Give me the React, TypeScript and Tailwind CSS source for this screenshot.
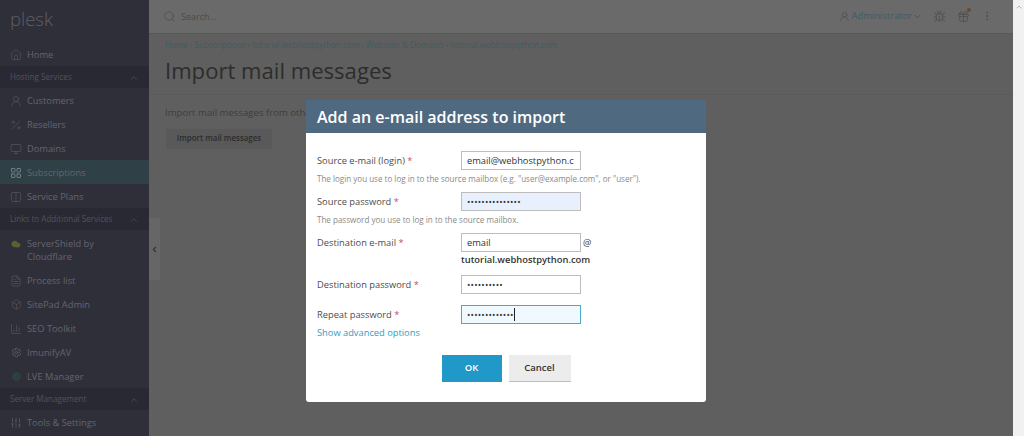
import React from "react";
import {
  Home,
  UserRound,
  Percent,
  Monitor,
  LayoutGrid,
  Columns2,
  FileText,
  BarChart3,
  Settings,
  SlidersVertical,
  ChevronUp,
  ChevronDown,
  ChevronLeft,
  Search,
  Cloud,
  Box,
  EllipsisVertical,
  Gift,
  Bug,
} from "lucide-react";

const font = "font-['Open_Sans','Liberation_Sans',sans-serif]";

const NavItem = ({ icon, children, active = false }: { icon: React.ReactNode; children: React.ReactNode; active?: boolean }) => (
  <div className={`flex items-center h-6 pt-px pl-[10px] gap-[5px] text-[9.3px] text-[#646470] ${active ? "bg-[#2f4146]" : ""}`}>
    <span className={`w-[12px] flex justify-center shrink-0 ${active ? "text-[#7a8488]" : "text-[#5a5a64]"}`}>{icon}</span>
    <span>{children}</span>
  </div>
);

const NavGroup = ({ children }: { children: React.ReactNode }) => (
  <div className="flex items-center justify-between h-[22px] pt-px pl-[10px] pr-[10px] bg-[#292933] text-[8.1px] text-[#52525c]">
    <span>{children}</span>
    <ChevronUp size={10} className="text-[#4c4c56]" />
  </div>
);

const Sidebar = () => (
  <aside className="w-[149px] h-[436px] bg-[#2f2f39] shrink-0 overflow-hidden">
    <div className="h-[42px] pl-[10px] pt-[7px] text-[18.5px] leading-[24px] font-light text-[#5e5e68]">plesk</div>
    <NavItem icon={<Home size={12} strokeWidth={1.25} />}>Home</NavItem>
    <NavGroup>Hosting Services</NavGroup>
    <NavItem icon={<UserRound size={12} strokeWidth={1.25} />}>Customers</NavItem>
    <NavItem icon={<Percent size={12} strokeWidth={1.25} />}>Resellers</NavItem>
    <NavItem icon={<Monitor size={12} strokeWidth={1.25} />}>Domains</NavItem>
    <NavItem active icon={<LayoutGrid size={12} strokeWidth={1.75} />}>Subscriptions</NavItem>
    <NavItem icon={<Columns2 size={12} strokeWidth={1.25} />}>Service Plans</NavItem>
    <NavGroup>Links to Additional Services</NavGroup>
    <div className="flex items-center h-[38px] pt-px pl-[10px] gap-[5px] text-[9.3px] leading-[13px] text-[#646470]">
      <span className="w-[12px] flex justify-center self-start pt-[8px] shrink-0"><Cloud size={10} className="text-[#5a6030]" fill="#5a6030" /></span>
      <span>ServerShield by<br />Cloudflare</span>
    </div>
    <NavItem icon={<FileText size={12} strokeWidth={1.25} />}>Process list</NavItem>
    <NavItem icon={<Box size={11} strokeWidth={1.5} className="text-[#5f4f52]" />}>SitePad Admin</NavItem>
    <NavItem icon={<BarChart3 size={12} strokeWidth={1.25} />}>SEO Toolkit</NavItem>
    <NavItem icon={<Settings size={11} strokeWidth={2} />}>ImunifyAV</NavItem>
    <NavItem icon={<span className="block w-[9px] h-[9px] rounded-full bg-[#2f3f3f]" />}>LVE Manager</NavItem>
    <NavGroup>Server Management</NavGroup>
    <NavItem icon={<SlidersVertical size={12} strokeWidth={1.5} />}>Tools &amp; Settings</NavItem>
  </aside>
);

const TopBar = () => (
  <div className="flex items-center h-[34px] border-b border-[#585858] pl-[14px] pr-[20px] bg-[#6a6a6a]">
    <Search size={13} strokeWidth={1.25} className="text-[#4a4a4a]" />
    <span className="ml-[5px] text-[9px] text-[#4a4a4a]">Search...</span>
    <div className="ml-auto flex items-center text-[#4a4a4a]">
      <UserRound size={11} strokeWidth={1.25} />
      <span className="ml-[2px] text-[9.4px] text-[#3f5c66]">Administrator</span>
      <ChevronDown size={9} className="ml-[1px]" />
      <Bug size={13} strokeWidth={1.25} className="ml-[11px]" />
      <span className="relative ml-[11px]">
        <Gift size={13} strokeWidth={1.25} />
        <span className="absolute -top-[2px] -right-[1px] w-[4px] h-[4px] rounded-full bg-[#6b4a2a]" />
      </span>
      <EllipsisVertical size={12} strokeWidth={1.5} className="ml-[11px]" />
    </div>
  </div>
);

const Field = ({ label, children, hint }: { label: string; children: React.ReactNode; hint?: string }) => (
  <div>
    <div className="flex items-center">
      <label className="w-[144px] text-[9.3px] text-[#4c4c4c]">
        {label} <span className="text-[#c4506a]">*</span>
      </label>
      {children}
    </div>
    {hint && <p className="mt-[3px] text-[8.05px] leading-[12px] text-[#8a8a8a]">{hint}</p>}
  </div>
);

const inputCls =
  "w-[120px] h-[19px] pl-[5px] border border-[#bdbdbd] text-[9.3px] leading-[17px] text-[#333] flex items-center";

const Dots = ({ n }: { n: number }) => (
  <span className="text-[9px] tracking-[0.2px] text-[#333]">{"•".repeat(n)}</span>
);

const Modal = () => (
  <div className="absolute left-[306px] top-[100px] w-[400px] h-[302px] bg-white rounded-b-[3px] overflow-hidden">
    <div className="h-[33px] bg-[#4f6a80] flex items-center px-[11px] text-[16px] font-semibold text-white">
      Add an e-mail address to import
    </div>
    <div className="pl-[11px] pr-[11px] pt-[18px]">
      <Field label="Source e-mail (login)" hint={'The login you use to log in to the source mailbox (e.g. "user@example.com", or "user").'}>
        <div className={`${inputCls} overflow-hidden whitespace-nowrap`}>email@webhostpython.c</div>
      </Field>
      <div className="mt-[7px]">
        <Field label="Source password" hint="The password you use to log in to the source mailbox.">
          <div className={`${inputCls} bg-[#e8f0fe]`}><Dots n={15} /></div>
        </Field>
      </div>
      <div className="mt-[7px]">
        <Field label="Destination e-mail">
          <div className={inputCls}>email</div>
          <span className="ml-[2px] text-[9.3px] text-[#444]">@</span>
        </Field>
      </div>
      <div className="ml-[144px] h-[16px] text-[9.4px] leading-[16px] font-semibold text-[#333]">tutorial.webhostpython.com</div>
      <div className="mt-[7px]">
        <Field label="Destination password">
          <div className={inputCls}><Dots n={10} /></div>
        </Field>
      </div>
      <div className="mt-[11px]">
        <Field label="Repeat password">
          <div className={`${inputCls} bg-[#f0f9fd] !border-[#4aa8c8]`}>
            <Dots n={13} />
            <span className="w-px h-[13px] bg-[#222]" />
          </div>
        </Field>
      </div>
      <div className="mt-px text-[9.3px] leading-[16px] text-[#2b9ec4]">Show advanced options</div>
      <div className="flex justify-center gap-[7px] mt-[14px]">
        <button className="w-[60px] h-[27px] bg-[#2098c8] text-white text-[9.5px] font-semibold">OK</button>
        <button className="w-[62px] h-[27px] bg-[#ececec] border-b border-[#bbb] text-[#333] text-[9.5px] font-semibold">Cancel</button>
      </div>
    </div>
  </div>
);

export default function App() {
  return (
    <div className={`relative w-[1024px] h-[436px] overflow-hidden flex bg-[#5f5f5f] ${font}`}>
      <Sidebar />
      <main className="flex-1 relative min-w-0">
        <TopBar />
        <div className="pl-[16px] h-[61px] border-b border-[#5a5a5a]">
          <div className="pt-[5px] h-[20px] text-[8.1px] leading-[11px] text-[#3f5c60] whitespace-nowrap">
            Home › Subscriptions › tutorial.webhostpython.com › Websites &amp; Domains › tutorial.webhostpython.com
          </div>
          <h1 className="-mt-px text-[22.1px] leading-[34px] text-[#2d2d2d]">Import mail messages</h1>
        </div>
        <div className="pl-[16px] pt-[11px]">
          <p className="text-[9.6px] leading-[14px] text-[#3e3e3e]">Import mail messages from other mail servers.</p>
          <button className="mt-[9px] ml-px w-[106px] h-[20px] bg-[#595959] text-[7.95px] font-semibold text-[#2d2d2d]">Import mail messages</button>
        </div>
        <div className="absolute left-0 top-[218px] w-[11px] h-[62px] bg-[#666666] flex items-center justify-center">
          <ChevronLeft size={9} strokeWidth={3} className="text-[#333]" />
        </div>
      </main>
      <div className="w-[11px] bg-[#f1f1f1] shrink-0 flex justify-center pt-[3px]">
        <ChevronUp size={8} className="text-[#999]" />
      </div>
      <Modal />
    </div>
  );
}
